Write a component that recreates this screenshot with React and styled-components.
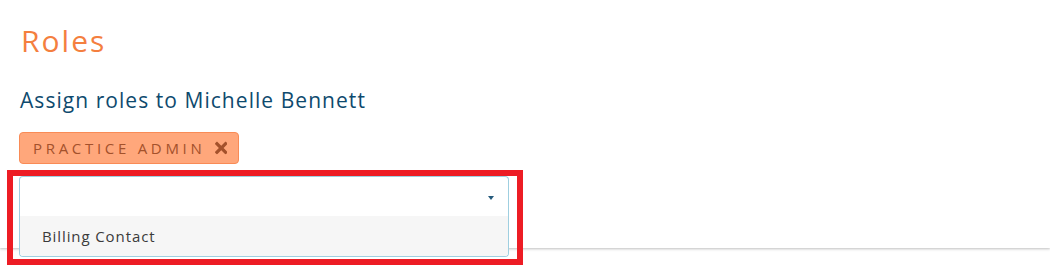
import React from "react";
import styled, { createGlobalStyle } from "styled-components";
import { FaTimes } from "react-icons/fa";

const GlobalStyle = createGlobalStyle`
  html, body {
    margin: 0;
    background: #ffffff;
    font-family: "Open Sans", "Liberation Sans", sans-serif;
  }
`;

const Page = styled.div`
  position: relative;
  width: 1050px;
  height: 265px;
  overflow: hidden;
`;

const Card = styled.section`
  height: 248px;
  box-sizing: border-box;
  padding: 24px 20px 0 19px;
  background: #ffffff;
  box-shadow: 0 1px 2px rgba(0, 0, 0, 0.18), 0 2px 3px rgba(0, 0, 0, 0.06);
  display: flex;
  flex-direction: column;
  align-items: flex-start;
`;

const Title = styled.h2`
  margin: 0 0 0 2px;
  font-size: 30px;
  line-height: 34px;
  font-weight: 400;
  letter-spacing: 2px;
  color: #f47f3f;
`;

const Subtitle = styled.p`
  margin: 30px 0 0 1px;
  font-size: 21px;
  line-height: 24px;
  letter-spacing: 1.05px;
  color: #0e4a6e;
`;

const Tag = styled.span`
  margin-top: 20px;
  height: 32px;
  box-sizing: border-box;
  display: inline-flex;
  align-items: center;
  gap: 9px;
  padding: 0 11px 0 13px;
  background: #ffa77b;
  border: 1px solid #f98b56;
  border-radius: 4px;
  color: #a4512b;
  font-size: 15px;
  letter-spacing: 3.7px;
  text-transform: uppercase;

  svg {
    width: 12.5px;
    height: 18px;
    flex: none;
  }
`;

const SelectBox = styled.div`
  position: relative;
  margin-top: 12px;
  width: 490px;
`;

const Control = styled.div`
  height: 40px;
  box-sizing: border-box;
  display: flex;
  align-items: center;
  justify-content: flex-end;
  padding-right: 14px;
  border: 1px solid #9fcfe0;
  border-bottom: none;
  border-radius: 4px 4px 0 0;
  background: #ffffff;
`;

const Caret = styled.span`
  width: 0;
  height: 0;
  border-left: 3.5px solid transparent;
  border-right: 3.5px solid transparent;
  border-top: 4px solid #255a7c;
  margin-top: 2px;
`;

const Menu = styled.ul`
  position: absolute;
  top: 40px;
  left: 0;
  right: 0;
  margin: 0;
  padding: 0;
  list-style: none;
  border: 1px solid #9fcfe0;
  border-top: none;
  border-radius: 0 0 4px 4px;
  background: #ffffff;
  overflow: hidden;
  z-index: 2;
`;

const Option = styled.li`
  height: 40px;
  display: flex;
  align-items: center;
  padding-left: 22px;
  font-size: 15px;
  letter-spacing: 0.9px;
  color: #3b3b3b;
  background: ${(props) => (props.active ? "#f6f6f6" : "#ffffff")};
`;

const Highlight = styled.div`
  position: absolute;
  left: 7px;
  top: 170px;
  width: 516px;
  height: 95px;
  box-sizing: border-box;
  border: 6px solid #ed1c24;
  pointer-events: none;
  z-index: 3;
`;

const App = () => {
  return (
    <Page>
      <GlobalStyle />
      <Card>
        <Title>Roles</Title>
        <Subtitle>Assign roles to Michelle Bennett</Subtitle>
        <Tag>
          Practice Admin
          <FaTimes />
        </Tag>
        <SelectBox>
          <Control>
            <Caret />
          </Control>
          <Menu>
            <Option active>Billing Contact</Option>
          </Menu>
        </SelectBox>
      </Card>
      <Highlight />
    </Page>
  );
};

export default App;
